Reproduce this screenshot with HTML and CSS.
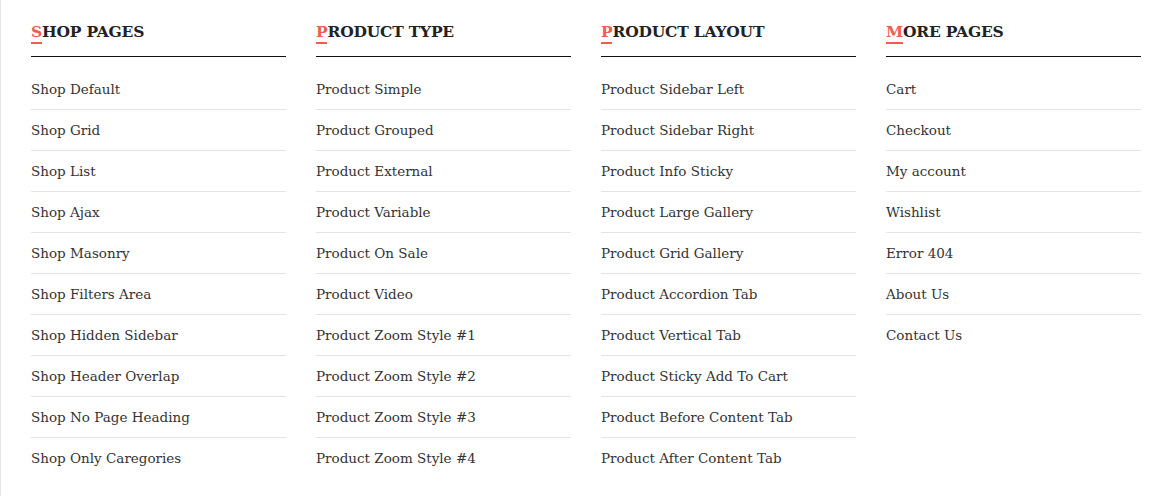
FILE: index.html
```html
<!DOCTYPE html>
<html lang="en">
<head>
    <meta charset="UTF-8">
    <title>Mega Menu</title>
    <link rel="stylesheet" href="styles.css">
</head>
<body>
    <div class="mega-menu">
        <div class="menu-col">
            <h3 class="menu-title"><span class="first">S</span>hop Pages</h3>
            <ul class="menu-list">
                <li><a href="#">Shop Default</a></li>
                <li><a href="#">Shop Grid</a></li>
                <li><a href="#">Shop List</a></li>
                <li><a href="#">Shop Ajax</a></li>
                <li><a href="#">Shop Masonry</a></li>
                <li><a href="#">Shop Filters Area</a></li>
                <li><a href="#">Shop Hidden Sidebar</a></li>
                <li><a href="#">Shop Header Overlap</a></li>
                <li><a href="#">Shop No Page Heading</a></li>
                <li><a href="#">Shop Only Caregories</a></li>
            </ul>
        </div>
        <div class="menu-col">
            <h3 class="menu-title"><span class="first">P</span>roduct Type</h3>
            <ul class="menu-list">
                <li><a href="#">Product Simple</a></li>
                <li><a href="#">Product Grouped</a></li>
                <li><a href="#">Product External</a></li>
                <li><a href="#">Product Variable</a></li>
                <li><a href="#">Product On Sale</a></li>
                <li><a href="#">Product Video</a></li>
                <li><a href="#">Product Zoom Style #1</a></li>
                <li><a href="#">Product Zoom Style #2</a></li>
                <li><a href="#">Product Zoom Style #3</a></li>
                <li><a href="#">Product Zoom Style #4</a></li>
            </ul>
        </div>
        <div class="menu-col">
            <h3 class="menu-title"><span class="first">P</span>roduct Layout</h3>
            <ul class="menu-list">
                <li><a href="#">Product Sidebar Left</a></li>
                <li><a href="#">Product Sidebar Right</a></li>
                <li><a href="#">Product Info Sticky</a></li>
                <li><a href="#">Product Large Gallery</a></li>
                <li><a href="#">Product Grid Gallery</a></li>
                <li><a href="#">Product Accordion Tab</a></li>
                <li><a href="#">Product Vertical Tab</a></li>
                <li><a href="#">Product Sticky Add To Cart</a></li>
                <li><a href="#">Product Before Content Tab</a></li>
                <li><a href="#">Product After Content Tab</a></li>
            </ul>
        </div>
        <div class="menu-col">
            <h3 class="menu-title"><span class="first">M</span>ore Pages</h3>
            <ul class="menu-list">
                <li><a href="#">Cart</a></li>
                <li><a href="#">Checkout</a></li>
                <li><a href="#">My account</a></li>
                <li><a href="#">Wishlist</a></li>
                <li><a href="#">Error 404</a></li>
                <li><a href="#">About Us</a></li>
                <li><a href="#">Contact Us</a></li>
            </ul>
        </div>
    </div>
</body>
</html>
```

FILE: styles.css
```css
body {
    margin: 0;
    background-color: #fff;
    font-family: "DejaVu Serif", "Liberation Serif", serif;
    color: #333;
}
.mega-menu {
    display: flex;
    gap: 30px;
    padding: 0 0 0 30px;
    border-left: 1px solid #e6e6e6;
    height: 496px;
    box-sizing: border-box;
}
.menu-col {
    width: 255px;
    flex-shrink: 0;
}
.menu-title {
    margin: 0;
    padding: 18px 0 10px 0;
    border-bottom: 1px solid #111;
    font-size: 15.5px;
    font-weight: bold;
    line-height: 28px;
    text-transform: uppercase;
    color: #222;
    letter-spacing: -0.2px;
}
.menu-title .first {
    color: #ec5f4f;
    display: inline-block;
    line-height: 20px;
    border-bottom: 2px solid #ec5f4f;
}
.menu-list {
    list-style: none;
    margin: 12px 0 0 0;
    padding: 0;
}
.menu-list li {
    border-bottom: 1px solid #e4e4e4;
}
.menu-list li:last-child {
    border-bottom: none;
}
.menu-list a {
    display: block;
    padding: 10px 0;
    line-height: 20px;
    font-size: 13.5px;
    color: #333;
    text-decoration: none;
}
```
